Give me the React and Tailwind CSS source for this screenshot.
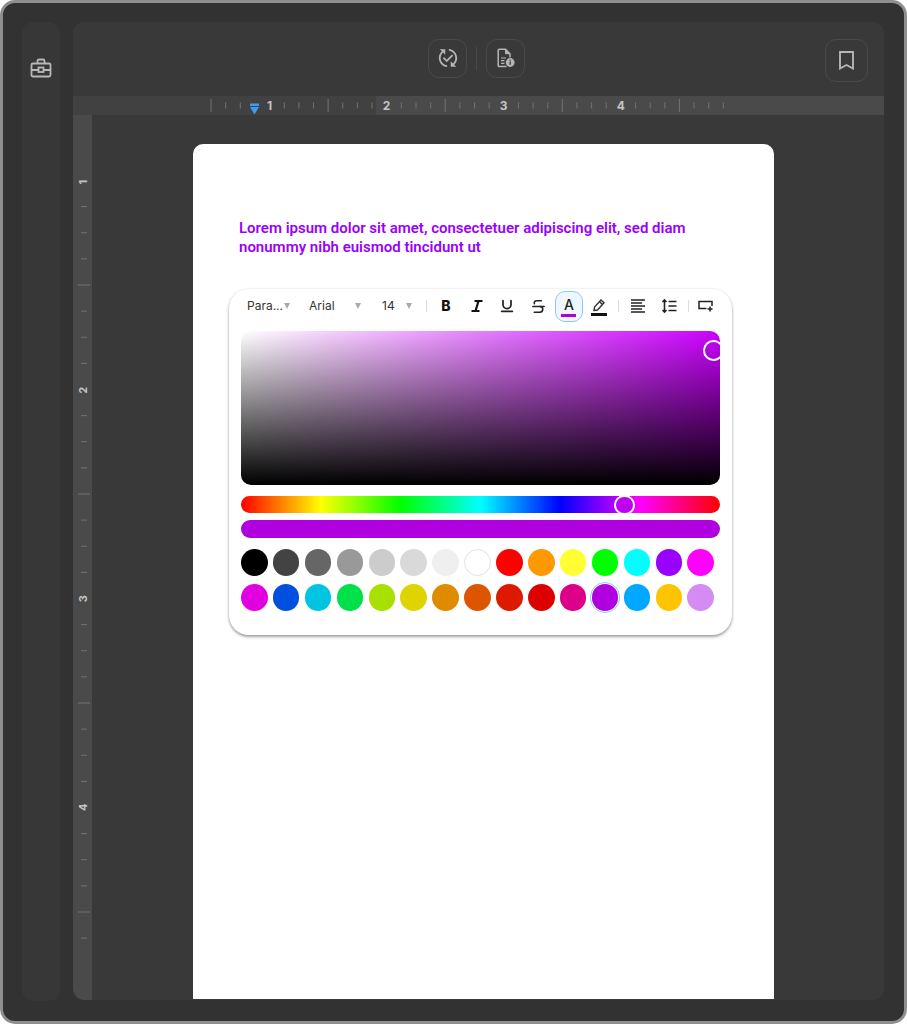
import React from "react";
import { Underline, Strikethrough } from "lucide-react";
import { MdPublishedWithChanges } from "react-icons/md";

const row1 = ["#000000","#434343","#666666","#999999","#cccccc","#d9d9d9","#efefef","#ffffff","#ff0000","#ff9900","#ffff33","#00ff00","#00ffff","#9900ff","#ff00ff"];
const row2 = ["#e000e0","#0050e0","#00c4e0","#00e04a","#a8e000","#e0d400","#e08a00","#dd5500","#dd1a00","#dd0000","#dd0088","#b000e0","#00a8ff","#ffc400","#d58cf2"];

function HRuler() {
  const ticks = [];
  for (let i = 0; i < 5; i++) {
    const x0 = 138 + i * 117.1;
    for (let j = 0; j < 8; j++) {
      const x = x0 + j * 14.65;
      if (i === 4 && j > 3) continue;
      if (j === 4 && i < 4) continue;
      if (i === 0 && j === 3) continue;
      ticks.push(<line key={i + "-" + j} x1={x} x2={x} y1={j === 0 ? 3 : 6.5} y2={j === 0 ? 16 : 12.5} stroke="#737373" strokeWidth="1" />);
    }
  }
  return (
    <svg width="811" height="19" className="block shrink-0">
      <rect x="0" y="0" width="811" height="19" fill="#414141" />
      <rect x="303" y="0" width="508" height="19" fill="#4a4a4a" />
      {ticks}
      {[1, 2, 3, 4].map((n, i) => (
        <text key={n} x={196.5 + i * 117.1} y="14" textAnchor="middle" fontSize="12" fontWeight="700" fill="#c4c4c4" fontFamily="Inter, sans-serif">{n}</text>
      ))}
      <rect x="177" y="7.5" width="9" height="2.5" fill="#3e9bf2" />
      <path d="M177 11 H186 L181.5 18.5 Z" fill="#3e9bf2" />
    </svg>
  );
}

function VRuler() {
  const ticks = [];
  for (let i = 0; i < 5; i++) {
    const y0 = -39 + i * 209.0;
    for (let j = 0; j < 8; j++) {
      const y = y0 + j * 26.12;
      if (j === 4) continue;
      if (y < 85) continue;
      if (i === 4 && j > 1) continue;
      ticks.push(<line key={i + "-" + j} y1={y} y2={y} x1={j === 0 ? 5 : 8} x2={j === 0 ? 17 : 14} stroke="#737373" strokeWidth="1" />);
    }
  }
  return (
    <svg width="19" height="884" className="block">
      {ticks}
      {[1, 2, 3, 4].map((n, i) => {
        const y = 67 + i * 208.4;
        return (
          <text key={n} x="11" y={y} textAnchor="middle" dominantBaseline="middle" fontSize="11" fontWeight="700" fill="#c4c4c4" fontFamily="Inter, sans-serif" transform={`rotate(-90 11 ${y})`}>{n}</text>
        );
      })}
    </svg>
  );
}

function IconBox({ children, size = "w-[39px] h-[39px]" }) {
  return <div className={`${size} rounded-[11px] border border-[#4a4a4a] flex items-center justify-center`}>{children}</div>;
}

function DocInfo() {
  return (
    <svg width="18" height="20" viewBox="0 0 18 20" fill="none">
      <path d="M9.5 18.5H2.5A1 1 0 0 1 1.2 17.5V2.5A1 1 0 0 1 2.2 1.2H8.5L13 5.7V9.5" stroke="#b5b5b5" strokeWidth="1.5" />
      <path d="M8.5 1.2V5.7H13" fill="#b5b5b5" stroke="#b5b5b5" strokeWidth="1" />
      <path d="M4 10h5M4 12.7h3.5M4 15.4h3.5" stroke="#b5b5b5" strokeWidth="1.2" />
      <circle cx="13.2" cy="14.5" r="4.4" fill="#b5b5b5" />
      <path d="M13.2 13.5v3.2M13.2 11.7v1" stroke="#3a3a3a" strokeWidth="1.4" />
    </svg>
  );
}

function Briefcase() {
  return (
    <svg width="22" height="20" viewBox="0 0 22 20" fill="none" stroke="#b8b8b8" strokeWidth="1.8">
      <path d="M3 5.5h16a1.5 1.5 0 0 1 1.5 1.5v10a1.5 1.5 0 0 1-1.5 1.5H3A1.5 1.5 0 0 1 1.5 17V7A1.5 1.5 0 0 1 3 5.5Z" />
      <path d="M7.5 5.5V3a1.5 1.5 0 0 1 1.5-1.5h4A1.5 1.5 0 0 1 14.5 3v2.5" />
      <path d="M1.5 12h6.5M14 12h6.5" />
      <rect x="8.5" y="9.5" width="5" height="4.5" />
    </svg>
  );
}

function Select({ label, w, gap }) {
  return (
    <div className={`${w} flex items-center shrink-0`}>
      <span className="text-[12px] text-[#333333] font-['Inter',sans-serif]">{label}</span>
      <span className={`${gap} w-0 h-0 border-l-[3px] border-r-[3px] border-t-[6px] border-l-transparent border-r-transparent border-t-[#aaaaaa]`} />
    </div>
  );
}

function Swatch({ c, selected }) {
  if (selected) {
    return <div className="w-[26.5px] h-[26.5px] rounded-full shrink-0 outline-1 outline-offset-1 outline-[#8ccbff]" style={{ background: c }} />;
  }
  return <div className={`w-[26.5px] h-[26.5px] rounded-full shrink-0 ${c === "#ffffff" ? "border border-[#e2e2e2]" : ""}`} style={{ background: c }} />;
}

export default function App() {
  return (
    <div className="w-[907px] h-[1024px] bg-white font-['Inter',sans-serif] overflow-hidden">
      <div className="w-full h-full rounded-[15px] border-[3px] border-[#8f8f8f] bg-[#323232] flex gap-[13px] pl-[19px] pr-[20px] pt-[19px] pb-[20px]">
        <aside className="w-[38px] shrink-0 bg-[#373737] rounded-[11px] flex justify-center items-start pt-[36px]">
          <Briefcase />
        </aside>
        <main className="w-[811px] shrink-0 mb-[1px] bg-[#393939] rounded-[11px] flex flex-col overflow-hidden">
          <div className="h-[74px] shrink-0 relative flex items-center justify-center">
            <div className="flex items-center gap-[9px] pr-[4px] pb-[2px]">
              <IconBox><MdPublishedWithChanges size={22} color="#b5b5b5" /></IconBox>
              <div className="w-px h-[23px] bg-[#4a4a4a]" />
              <IconBox><DocInfo /></IconBox>
            </div>
            <div className="absolute right-[16px] top-[17px]">
              <IconBox size="w-[43px] h-[43px]">
                <svg width="15" height="19" viewBox="0 0 15 19" fill="none" stroke="#b5b5b5" strokeWidth="1.9"><path d="M1 1h13v16.5L7.5 14 1 17.5Z" /></svg>
              </IconBox>
            </div>
          </div>
          <HRuler />
          <div className="flex flex-1 min-h-0">
            <div className="w-[19px] shrink-0 bg-[#4a4a4a] rounded-bl-[11px] overflow-hidden"><VRuler /></div>
            <div className="flex-1 pl-[101px] pt-[29px] pb-[1px] min-h-0">
              <div className="w-[581px] h-full bg-white rounded-t-[10px] pt-[75px] px-[46px]">
                <p className="text-[15px] leading-[19px] font-semibold text-[#9900ff] font-['Roboto',sans-serif]">
                  Lorem ipsum dolor sit amet, consectetuer adipiscing elit, sed diam nonummy nibh euismod tincidunt ut
                </p>
                <div className="mt-[32px] -ml-[10px] w-[503px] h-[346px] bg-white rounded-[20px] shadow-[0_2px_3px_rgba(0,0,0,0.35),0_0_3px_rgba(0,0,0,0.1)] px-[12px] flex flex-col">
                  <div className="h-[42px] shrink-0 flex items-center pb-[8px] text-[#222222]">
                    <div className="pl-[6px] flex items-center">
                      <Select label="Para..." w="w-[62px]" gap="ml-[1px]" />
                      <Select label="Arial" w="w-[73px]" gap="ml-[20px]" />
                      <Select label="14" w="w-[45px]" gap="ml-[11px]" />
                    </div>
                    <div className="w-px h-[12px] bg-[#dddddd] ml-[-1px]" />
                    <div className="w-[30.7px] ml-[3.6px] flex justify-center">
                      <span className="text-[14px] leading-none font-extrabold text-[#111111]">B</span>
                    </div>
                    <div className="w-[30.7px] flex justify-center">
                      <svg width="12" height="12" viewBox="0 0 12 12" fill="none" stroke="#111111" strokeWidth="2.2"><path d="M3.5 1h8M0.5 11h8M7.5 1 4.5 11" /></svg>
                    </div>
                    <div className="w-[30.7px] flex justify-center"><Underline size={16} strokeWidth={2.6} /></div>
                    <div className="w-[30.7px] flex justify-center"><Strikethrough size={17} strokeWidth={2.2} /></div>
                    <div className="w-[28px] h-[31px] ml-[1.6px] mb-[-1px] rounded-[10px] border border-[#8cc8f5] bg-[#eef7fe] flex flex-col items-center justify-center">
                      <span className="text-[14px] leading-[15px] font-medium text-[#222222]">A</span>
                      <span className="w-[15px] h-[3px] bg-[#b000e0] mt-[2px]" />
                    </div>
                    <div className="w-[28px] ml-[2px] flex flex-col items-center pt-[1px]">
                      <svg width="14" height="14" viewBox="0 0 14 14" fill="none" stroke="#333333" strokeWidth="1.4"><path d="M2 12.5 2.5 9 9 2 12 4.8 5.5 12 2 12.5Z" /><path d="M7.5 3.8l3 2.8" /></svg>
                      <span className="w-[16px] h-[3px] bg-[#111111] mt-[1px]" />
                    </div>
                    <div className="w-px h-[12px] bg-[#dddddd] ml-[5.5px]" />
                    <div className="w-[37px] flex justify-center">
                      <svg width="14" height="14" viewBox="0 0 14 14" fill="none" stroke="#222222" strokeWidth="1.6"><path d="M0 1h14M0 4h11M0 7h14M0 10h11M0 13h14" /></svg>
                    </div>
                    <div className="w-[26px] flex justify-center">
                      <svg width="16" height="16" viewBox="0 0 16 16" fill="none" stroke="#222222" strokeWidth="1.6"><path d="M3.5 2v12M1.5 4l2-2 2 2M1.5 12l2 2 2-2" /><path d="M7.5 3.5h8M7.5 8h8M7.5 12.5h8" /></svg>
                    </div>
                    <div className="w-px h-[12px] bg-[#dddddd] ml-[5.5px]" />
                    <div className="ml-[9.5px]">
                      <svg width="16" height="14" viewBox="0 0 16 14" fill="none" stroke="#222222" strokeWidth="1.5"><path d="M8.5 9.5H1V2.5h13V7" /><path d="M12 7.5v5M9.5 10h5" /></svg>
                    </div>
                  </div>
                  <div className="relative h-[154px] shrink-0 rounded-[10px] overflow-hidden bg-[linear-gradient(to_bottom,rgba(0,0,0,0),#000),linear-gradient(to_right,#ffffff,#cc00ff)]">
                    <div className="absolute left-[462px] top-[9px] w-[21px] h-[21px] rounded-full border-[2.5px] border-white" />
                  </div>
                  <div className="relative h-[17px] mt-[11px] shrink-0 rounded-full bg-[linear-gradient(to_right,#ff0000,#ffff00,#00ff00,#00ffff,#0000ff,#ff00ff,#ff0000)]">
                    <div className="absolute left-[372.5px] top-[-1.5px] w-[21px] h-[20px] rounded-full border-2 border-white bg-[#c000f0]" />
                  </div>
                  <div className="h-[18px] mt-[7px] shrink-0 rounded-full bg-[#b000e0]" />
                  <div className="mt-[11px] w-[473px] flex justify-between">
                    {row1.map((c, i) => <Swatch key={i} c={c} />)}
                  </div>
                  <div className="mt-[8.5px] w-[473px] flex justify-between">
                    {row2.map((c, i) => <Swatch key={i} c={c} selected={c === "#b000e0"} />)}
                  </div>
                </div>
              </div>
            </div>
          </div>
        </main>
      </div>
    </div>
  );
}
